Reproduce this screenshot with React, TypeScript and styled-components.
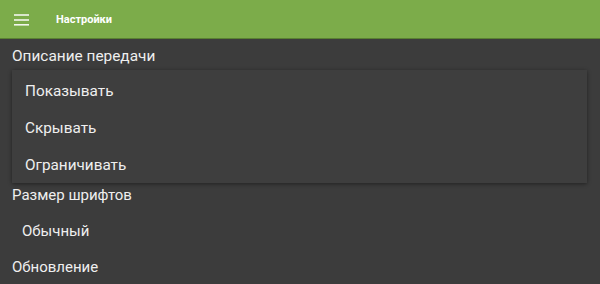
import styled, { createGlobalStyle } from "styled-components";

const Global = createGlobalStyle`
  html, body {
    margin: 0;
    padding: 0;
    background: #3c3c3c;
  }
  body {
    font-family: Roboto, "Noto Sans", sans-serif;
    color: #efefef;
  }
`;

const Page = styled.div`
  width: 600px;
  height: 284px;
  overflow: hidden;
  background: #3c3c3c;
`;

const AppBar = styled.header`
  height: 39px;
  background: #7cac4a;
  border-bottom: 1px solid #5a8132;
  box-sizing: border-box;
  display: flex;
  align-items: center;
  padding: 1px 0 0 14px;
  gap: 27px;
`;

const Title = styled.div`
  font-size: 11px;
  font-weight: 700;
  color: #ffffff;
`;

const Body = styled.main`
  display: flex;
  flex-direction: column;
`;

const SectionTitle = styled.div<{ $big?: boolean; $h?: number }>`
  height: ${(p) => p.$h ?? 36}px;
  display: flex;
  align-items: center;
  padding-left: 12px;
  font-size: ${(p) => (p.$big ? 15.4 : 15)}px;
`;

const Value = styled.div`
  height: 36px;
  display: flex;
  align-items: center;
  padding-left: 22px;
  font-size: 15px;
`;

const Menu = styled.div`
  position: relative;
  z-index: 1;
  margin: -2px 13px -6px 12px;
  background: #3e3e3e;
  box-shadow: 0 1px 4px rgba(0, 0, 0, 0.45);
  display: flex;
  flex-direction: column;
  padding: 2px 0 0;
`;

const MenuItem = styled.div`
  height: 37px;
  display: flex;
  align-items: center;
  padding-left: 13px;
  font-size: 15.3px;
`;

const Burger = () => (
  <svg width="15" height="12" viewBox="0 0 15 12">
    <g stroke="#ffffff" strokeWidth="1.6" opacity="0.9">
      <line x1="0" y1="1" x2="15" y2="1" />
      <line x1="0" y1="6" x2="15" y2="6" />
      <line x1="0" y1="10.8" x2="15" y2="10.8" />
    </g>
  </svg>
);

export default function App() {
  return (
    <Page>
      <Global />
      <AppBar>
        <Burger />
        <Title>Настройки</Title>
      </AppBar>
      <Body>
        <SectionTitle $big $h={33}>Описание передачи</SectionTitle>
        <Menu>
          <MenuItem>Показывать</MenuItem>
          <MenuItem>Скрывать</MenuItem>
          <MenuItem>Ограничивать</MenuItem>
        </Menu>
        <SectionTitle>Размер шрифтов</SectionTitle>
        <Value>Обычный</Value>
        <SectionTitle>Обновление</SectionTitle>
      </Body>
    </Page>
  );
}
